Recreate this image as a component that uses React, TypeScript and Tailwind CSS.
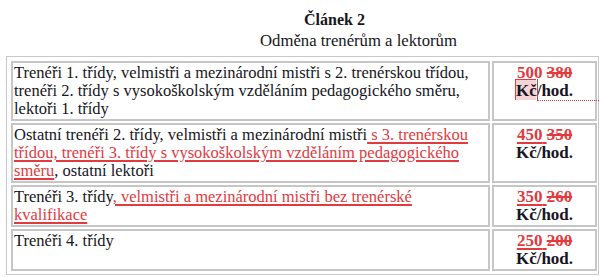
const red = "text-[#e23a3f]";

function Ins({ children }: { children: React.ReactNode }) {
  return (
    <span className={`${red} underline decoration-[#e23a3f] decoration-[1.5px] underline-offset-[2px]`}>
      {children}
    </span>
  );
}

function Del({ children }: { children: React.ReactNode }) {
  return <span className={`${red} line-through decoration-[#e23a3f] decoration-[1.5px]`}>{children}</span>;
}

function Price({ now, old, plain, marker }: { now: string; old: string; plain?: boolean; marker?: boolean }) {
  return (
    <div className="font-bold text-center text-[17px]">
      <div>
        {plain ? <span className={red}>{now} </span> : <Ins>{now} </Ins>}
        <Del>{old}</Del>
      </div>
      <div>
        {marker ? (
          <>
            <span className="relative">
              <span className="absolute left-[-1px] top-[-2px] w-[21px] h-[21px] bg-[#f6d3d6] border-l border-t border-[#e23a3f]" />
              <span className="relative">Kč</span>
            </span>
            <span className="relative">
              <span className="absolute left-0 top-[-2px] h-[22px] w-px bg-[#e23a3f]" />
              <span className="absolute left-0 top-[19px] w-[70px] border-t border-dotted border-[#e23a3f]" />
              /hod.
            </span>
          </>
        ) : (
          "Kč/hod."
        )}
      </div>
    </div>
  );
}

export default function App() {
  const cell = "border-2 border-[#c6c6c6] bg-white pt-[1px] pb-[1px] px-[1px]";
  return (
    <div
      className="w-[600px] h-[277px] bg-white text-[#161622] text-[16.5px] leading-[18px] overflow-hidden"
      style={{ fontFamily: '"Liberation Serif", "Times New Roman", serif' }}
    >
      <div className="pt-[10px] pl-[304px] text-[16px] leading-[19px] font-bold">Článek 2</div>
      <div className="pl-[260px] mt-[2px] text-[16.7px] leading-[19px]">Odměna trenérům a lektorům</div>
      <div className="ml-[6px] mt-[6px] w-[593px] border border-[#c8c8c8] pl-[4px] pr-[1px] pt-[4px] pb-[3px]">
        <div className="grid grid-cols-[479px_1fr] gap-x-[2px] gap-y-[2px]">
          <div className={cell}>
            Trenéři 1. třídy, velmistři a mezinárodní mistři s 2. trenérskou třídou, trenéři 2. třídy s
            vysokoškolským vzděláním pedagogického směru, lektoři 1. třídy
          </div>
          <div className={cell}>
            <Price now="500" old="380" plain marker />
          </div>
          <div className={cell}>
            Ostatní trenéři 2. třídy, velmistři a mezinárodní mistři
            <Ins> s 3. trenérskou třídou, trenéři 3. třídy s vysokoškolským vzděláním pedagogického směru</Ins>,
            ostatní lektoři
          </div>
          <div className={cell}>
            <Price now="450" old="350" />
          </div>
          <div className={cell}>
            Trenéři 3. třídy<Ins>, velmistři a mezinárodní mistři bez trenérské kvalifikace</Ins>
          </div>
          <div className={cell}>
            <Price now="350" old="260" />
          </div>
          <div className={cell}>Trenéři 4. třídy</div>
          <div className={cell}>
            <Price now="250" old="200" />
          </div>
        </div>
      </div>
    </div>
  );
}
